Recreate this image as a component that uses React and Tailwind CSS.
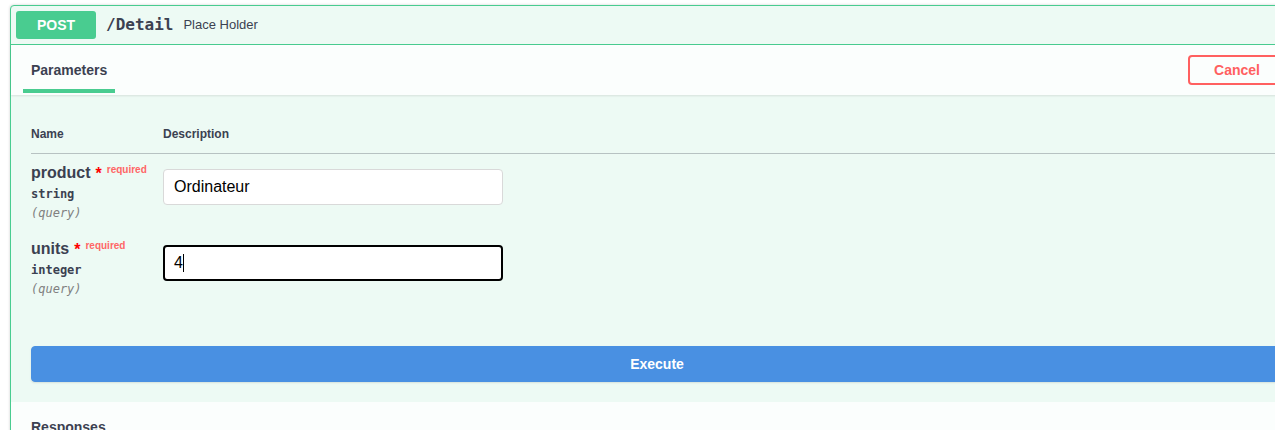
export default function App() {
  const sans = { fontFamily: '"Liberation Sans", Arial, sans-serif' };
  return (
    <div className="w-[1275px] h-[430px] overflow-hidden bg-white pt-[5px] pl-[10px] text-[#3b4151]" style={sans}>
      <div className="w-[1294px] border border-[#49cc90] rounded-[4px] bg-[#edfaf4] shadow-[0_0_3px_rgba(0,0,0,0.19)]">
        {/* summary */}
        <div className="flex items-center p-[5px] border-b border-[#49cc90]">
          <div className="w-[80px] h-[28px] rounded-[3px] bg-[#49cc90] text-white text-[14px] font-bold flex items-center justify-center">
            POST
          </div>
          <div
            className="ml-[10px] text-[16px] font-bold text-[#3b4151] leading-[20px]"
            style={{ fontFamily: '"DejaVu Sans Mono", monospace' }}
          >
            /Detail
          </div>
          <div className="ml-[10px] text-[13px] text-[#3b4151]">Place Holder</div>
        </div>

        {/* parameters header */}
        <div className="h-[50px] flex items-center justify-between px-5 bg-white/80 shadow-[0_1px_2px_rgba(0,0,0,0.1)]">
          <div className="self-stretch flex flex-col justify-end -ml-2 pb-[2px]">
            <div className="px-2 text-[14px] leading-[17px] font-bold text-[#3b4151]">Parameters</div>
            <div className="mt-[10px] h-[4px] bg-[#49cc90]"></div>
          </div>
          <div className="h-[30px] w-[98px] -mr-[3px] border-2 border-[#ff6060] rounded-[4px] text-[#ff6060] text-[14px] font-bold flex items-center justify-center">
            Cancel
          </div>
        </div>

        {/* parameters table */}
        <div className="px-5 pt-[32px] pb-5">
          <div className="flex border-b border-[#3b4151]/30 pb-[11px] text-[12px] leading-[15px] font-bold">
            <div className="w-[132px]">Name</div>
            <div>Description</div>
          </div>

          <ParamRow name="product" type="string" value="Ordinateur" />
          <ParamRow name="units" type="integer" value="4" focused />
        </div>

        {/* execute */}
        <div className="px-5 pt-5 pb-5">
          <div className="h-[36px] rounded-[4px] bg-[#4990e2] border border-[#4990e2] text-white text-[14px] font-bold flex items-center justify-center shadow-[0_1px_2px_rgba(0,0,0,0.1)]">
            Execute
          </div>
        </div>

        {/* responses */}
        <div className="h-[50px] flex items-center px-5 bg-white/80">
          <div className="text-[14px] leading-[17px] font-bold text-[#3b4151]">Responses</div>
        </div>
        <div className="h-[40px]"></div>
      </div>
    </div>
  );
}

function ParamRow({ name, type, value, focused }) {
  const mono = { fontFamily: '"DejaVu Sans Mono", monospace' };
  return (
    <div className="flex h-[76px]">
      <div className="w-[132px] pt-[9px]">
        <div className="flex items-start h-[21px]">
          <span className="text-[16px] leading-[19px] font-bold text-[#3b4151]">{name}</span>
          <span className="ml-[5px] text-[16px] leading-[22px] font-bold text-[#ff0000]">*</span>
          <span className="ml-[5px] mt-[1px] text-[10px] leading-[12px] font-bold text-[#ff6666]">required</span>
        </div>
        <div className="text-[12px] leading-[20px] font-bold text-[#3b4151]" style={mono}>
          {type}
        </div>
        <div className="text-[12px] leading-[19px] italic text-[#808080]" style={mono}>
          (query)
        </div>
      </div>
      <div className="pt-[15px]">
        {focused ? (
          <div className="w-[340px] h-[36px] rounded-[4px] border-2 border-black bg-white flex items-center px-[9px] text-[16px] text-black">
            <span>{value}</span>
            <span className="w-[1px] h-[18px] bg-black"></span>
          </div>
        ) : (
          <div className="w-[340px] h-[36px] rounded-[4px] border border-[#d9d9d9] bg-white flex items-center px-[10px] text-[16px] text-black">
            {value}
          </div>
        )}
      </div>
    </div>
  );
}
